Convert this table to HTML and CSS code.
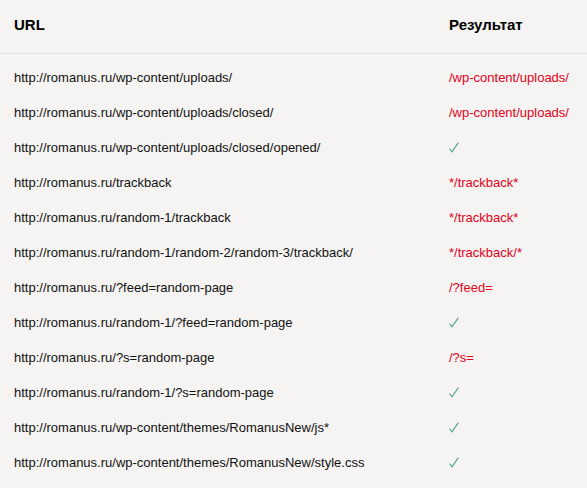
FILE: index.html
```html
<!DOCTYPE html>
<html>
<head>
<meta charset="utf-8">
<link rel="stylesheet" href="styles.css">
</head>
<body>
<div class="table">
  <div class="row head"><div class="c1">URL</div><div class="c2">Результат</div></div>
  <div class="body">
    <div class="row"><div class="c1">http://romanus.ru/wp-content/uploads/</div><div class="c2 red">/wp-content/uploads/</div></div>
    <div class="row"><div class="c1">http://romanus.ru/wp-content/uploads/closed/</div><div class="c2 red">/wp-content/uploads/</div></div>
    <div class="row"><div class="c1">http://romanus.ru/wp-content/uploads/closed/opened/</div><div class="c2 ok"><svg class="check" viewBox="0 0 10 11"><path d="M0.6 6.6 L3 9.8 L9.4 0.6"/></svg></div></div>
    <div class="row"><div class="c1">http://romanus.ru/trackback</div><div class="c2 red">*/trackback*</div></div>
    <div class="row"><div class="c1">http://romanus.ru/random-1/trackback</div><div class="c2 red">*/trackback*</div></div>
    <div class="row"><div class="c1">http://romanus.ru/random-1/random-2/random-3/trackback/</div><div class="c2 red">*/trackback/*</div></div>
    <div class="row"><div class="c1">http://romanus.ru/?feed=random-page</div><div class="c2 red">/?feed=</div></div>
    <div class="row"><div class="c1">http://romanus.ru/random-1/?feed=random-page</div><div class="c2 ok"><svg class="check" viewBox="0 0 10 11"><path d="M0.6 6.6 L3 9.8 L9.4 0.6"/></svg></div></div>
    <div class="row"><div class="c1">http://romanus.ru/?s=random-page</div><div class="c2 red">/?s=</div></div>
    <div class="row"><div class="c1">http://romanus.ru/random-1/?s=random-page</div><div class="c2 ok"><svg class="check" viewBox="0 0 10 11"><path d="M0.6 6.6 L3 9.8 L9.4 0.6"/></svg></div></div>
    <div class="row"><div class="c1">http://romanus.ru/wp-content/themes/RomanusNew/js*</div><div class="c2 ok"><svg class="check" viewBox="0 0 10 11"><path d="M0.6 6.6 L3 9.8 L9.4 0.6"/></svg></div></div>
    <div class="row"><div class="c1">http://romanus.ru/wp-content/themes/RomanusNew/style.css</div><div class="c2 ok"><svg class="check" viewBox="0 0 10 11"><path d="M0.6 6.6 L3 9.8 L9.4 0.6"/></svg></div></div>
  </div>
</div>
</body>
</html>
```
FILE: styles.css
```css
html, body {
  margin: 0;
  padding: 0;
  background: #f5f4f2;
}
body {
  font-family: "Liberation Sans", Arial, sans-serif;
  font-size: 13px;
  color: #111;
}
.table {
  width: 587px;
}
.row {
  display: grid;
  grid-template-columns: 435px 1fr;
  height: 35px;
  align-items: center;
}
.c1 {
  padding-left: 14px;
}
.c2 {
  padding-left: 14px;
}
.head {
  height: 53px;
  border-bottom: 1px solid #e2e1df;
  font-weight: bold;
  font-size: 15px;
  color: #000;
  align-items: start;
}
.head > div {
  padding-top: 16px;
}
.body {
  padding-top: 6px;
}
.red {
  color: #e4001b;
}
.ok {
  display: flex;
  align-items: center;
  height: 35px;
}
.check {
  width: 10px;
  height: 11px;
  display: block;
  margin-top: -1px;
}
.check path {
  fill: none;
  stroke: #52a17e;
  stroke-width: 1.1;
}
```
